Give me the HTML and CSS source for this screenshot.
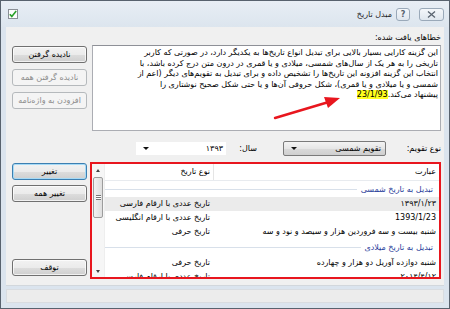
FILE: index.html
```html
<!DOCTYPE html>
<html lang="fa">
<head>
<meta charset="utf-8">
<title>مبدل تاریخ</title>
<link rel="stylesheet" href="styles.css">
</head>
<body>
<div class="window" dir="rtl">
  <div class="titlebar">
    <div class="tb-group">
      <div class="tbtn close">
        <svg width="9" height="7" viewBox="0 0 9 7"><path d="M1 0.5 L8 6.5 M8 0.5 L1 6.5" stroke="#5a6470" stroke-width="1.3" fill="none"/></svg>
      </div>
      <div class="tbtn help"><span>?</span></div>
      <div class="title">مبدل تاریخ</div>
    </div>
    <svg class="app-icon" width="10" height="10" viewBox="0 0 10 10">
      <rect x="0.5" y="0.5" width="9" height="9" fill="#fdfdfd" stroke="#8a8f96"/>
      <path d="M1.8 5.2 L3.8 7.4 L8.2 2" fill="none" stroke="#2aa12a" stroke-width="1.6"/>
    </svg>
  </div>

  <div class="client">
    <div class="main">
      <div class="caption">خطاهای یافت شده:</div>
      <div class="textbox">
        <div class="line">این گزینه کارایی بسیار بالایی برای تبدیل انواع تاریخ‌ها به یکدیگر دارد، در صورتی که کاربر</div>
        <div class="line">تاریخی را به هر یک از سال‌های شمسی، میلادی و یا قمری در درون متن درج کرده باشد، با</div>
        <div class="line">انتخاب این گزینه افزونه این تاریخ‌ها را تشخیص داده و برای تبدیل به تقویم‌های دیگر (اعم از</div>
        <div class="line">شمسی و یا میلادی و یا قمری)، شکل حروفی آن‌ها و یا حتی شکل صحیح نوشتاری را</div>
        <div class="line">پیشنهاد می‌کند.<span class="hl">23/1/93</span></div>
      </div>
      <div class="options">
        <div class="opt-label cal-label">نوع تقویم:</div>
        <div class="combo combo-btn"><span>تقویم شمسی</span><i class="drop"></i></div>
        <div class="opt-label year-label">سال:</div>
        <div class="combo combo-edit"><span>۱۳۹۳</span><i class="drop"></i></div>
      </div>
      <div class="list">
        <div class="lv">
          <div class="lv-head">
            <div class="c1">عبارت</div>
            <div class="c2">نوع تاریخ</div>
          </div>
          <div class="group g1"><span>تبدیل به تاریخ شمسی</span><i class="gline"></i></div>
          <div class="row hot"><div class="c1">۱۳۹۳/۱/۲۳</div><div class="c2">تاریخ عددی با ارقام فارسی</div></div>
          <div class="row"><div class="c1">1393/1/23</div><div class="c2">تاریخ عددی با ارقام انگلیسی</div></div>
          <div class="row"><div class="c1">شنبه بیست و سه فروردین هزار و سیصد و نود و سه</div><div class="c2">تاریخ حرفی</div></div>
          <div class="group g2"><span>تبدیل به تاریخ میلادی</span><i class="gline"></i></div>
          <div class="row"><div class="c1">شنبه دوازده آوریل دو هزار و چهارده</div><div class="c2">تاریخ حرفی</div></div>
          <div class="row"><div class="c1">۲۰۱۴/۴/۱۲</div><div class="c2">تاریخ عددی با ارقام فارسی</div></div>
        </div>
        <div class="scrollbar">
          <div class="sb-btn"><i class="up"></i></div>
          <div class="sb-thumb"><i class="grip"></i></div>
          <div class="sb-track"></div>
          <div class="sb-btn"><i class="down"></i></div>
        </div>
      </div>
    </div>

    <div class="side">
      <div class="btn b1">نادیده گرفتن</div>
      <div class="btn disabled b2">نادیده گرفتن همه</div>
      <div class="btn disabled b3">افزودن به واژه‌نامه</div>
      <div class="btn focus b4">تغییر</div>
      <div class="btn b5">تغییر همه</div>
      <div class="btn b6">توقف</div>
    </div>
  </div>

  <div class="statusbar"><div class="status-inner"></div></div>

  <svg class="annot" width="450" height="309" viewBox="0 0 450 309">
    <line x1="275" y1="118" x2="327" y2="102.5" stroke="#e8161e" stroke-width="2.4" stroke-linecap="round"/>
    <polygon points="340,98 324,97 328,108" fill="#e8161e"/>
  </svg>
</div>
</body>
</html>
```

FILE: styles.css
```css
* { box-sizing: border-box; }
html, body { margin: 0; padding: 0; }
body {
  width: 450px;
  height: 309px;
  overflow: hidden;
  background: #ffffff;
  font-family: "DejaVu Sans", "Noto Sans", sans-serif;
  font-size: 8px;
  color: #000;
}

.window {
  position: relative;
  width: 450px;
  height: 309px;
  border: 1px solid #58626e;
  background: #dbe4ee;
  display: flex;
  flex-direction: column;
}

/* title bar */
.titlebar {
  height: 26px;
  display: flex;
  justify-content: space-between;
  align-items: flex-start;
  padding: 7px 5px 0 7px;
  background: linear-gradient(#e8eef5, #dce5ee);
}
.tb-group {
  display: flex;
  align-items: flex-start;
}
.tbtn {
  height: 13px;
  border: 1px solid #9aa9b9;
  border-radius: 3px;
  background: linear-gradient(#f4f7fa, #dfe6ee);
  display: flex;
  align-items: center;
  justify-content: center;
  color: #56606c;
  font-size: 8px;
}
.tbtn.close { width: 25px; }
.tbtn.help { width: 14px; margin-right: 9px; font-weight: bold; }
.title { margin-right: 4px; line-height: 14px; color: #1c1c1c; }
.app-icon { margin-top: 1px; }

/* client */
.client {
  margin: 0 5px;
  height: 258px;
  background: #f0f0f0;
  display: flex;
  gap: 5px;
  padding: 4px 3px 0 6px;
}
.main {
  width: 349px;
  display: flex;
  flex-direction: column;
}
.side {
  width: 75px;
  display: flex;
  flex-direction: column;
}

.caption { height: 14px; line-height: 13px; }
.textbox {
  height: 86px;
  background: #fff;
  border: 1px solid #abadb3;
  border-top-color: #8e9097;
  padding: 2px 2px 0 4px;
  line-height: 10.6px;
  overflow: hidden;
}
.line { white-space: nowrap; }
.hl { background: #ffff1e; }

.options {
  margin-top: 10px;
  height: 15px;
  display: flex;
  align-items: center;
}
.opt-label { line-height: 15px; }
.cal-label { width: 55px; }
.year-label { width: 56px; padding-right: 26px; }
.combo {
  height: 15px;
  display: flex;
  align-items: center;
  justify-content: space-between;
}
.combo-btn {
  width: 103px;
  border: 1px solid #7a7a7a;
  border-radius: 2px;
  background: linear-gradient(#f3f3f3, #e6e6e6 50%, #dadada 51%, #cfcfcf);
  padding: 0 4px 0 7px;
}
.combo-edit {
  width: 92px;
  background: #fff;
  border: 1px solid #f0f0f0;
  padding: 0 3px 0 7px;
}
.drop {
  width: 0;
  height: 0;
  border-left: 3px solid transparent;
  border-right: 3px solid transparent;
  border-top: 3px solid #111;
}

/* list view */
.list {
  margin-top: 6px;
  margin-left: -2px;
  height: 117px;
  border: 2px solid #e8161e;
  background: #fff;
  display: flex;
  overflow: hidden;
}
.lv { flex: 1; overflow: hidden; }
.lv-head {
  height: 17px;
  display: flex;
  border-bottom: 1px solid #e8ebef;
  line-height: 16px;
}
.c1 { width: 226px; padding-right: 3px; white-space: nowrap; overflow: hidden; }
.c2 { width: 108px; padding-right: 3px; white-space: nowrap; overflow: hidden; }
.lv-head .c1 { border-left: 1px solid #e5e5e5; }
.group {
  display: flex;
  align-items: center;
  padding-right: 6px;
  color: #1f3b99;
}
.group.g1 { height: 16px; }
.group.g2 { height: 17px; }
.gline {
  flex: 1;
  height: 1px;
  margin-right: 4px;
  background: #d8e0ea;
}
.row { height: 14px; display: flex; line-height: 14px; }
.row.hot { background: #ebebeb; }

.scrollbar {
  width: 13px;
  display: flex;
  flex-direction: column;
  background: #f6f6f6;
  border-right: 1px solid #eeeeee;
}
.sb-btn {
  height: 12px;
  display: flex;
  align-items: center;
  justify-content: center;
}
.up, .down {
  width: 0;
  height: 0;
  border-left: 2.5px solid transparent;
  border-right: 2.5px solid transparent;
}
.up { border-bottom: 3px solid #404040; }
.down { border-top: 3px solid #404040; }
.sb-thumb {
  margin: 1px 1px 0;
  height: 41px;
  border: 1px solid #9c9c9c;
  border-radius: 2px;
  background: linear-gradient(90deg, #f2f2f2, #dedede);
  display: flex;
  align-items: center;
  justify-content: center;
}
.grip {
  width: 5px;
  height: 5px;
  border-top: 1px solid #777;
  border-bottom: 1px solid #777;
  background: linear-gradient(#fff 0 1px, #777 1px 2px, #fff 2px);
}
.sb-track { flex: 1; }

/* buttons */
.btn {
  height: 17px;
  border: 1px solid #707070;
  border-radius: 3px;
  background: linear-gradient(#f2f2f2, #ebebeb 50%, #dddddd 51%, #cfcfcf);
  box-shadow: inset 0 0 0 1px rgba(255, 255, 255, 0.7);
  display: flex;
  align-items: center;
  justify-content: center;
  white-space: nowrap;
}
.btn.disabled {
  border-color: #b5b9bc;
  background: #f4f4f4;
  box-shadow: none;
  color: #8c8c8c;
}
.btn.focus {
  border-color: #3c7fb1;
  box-shadow: inset 0 0 0 1px #a6daf6;
}
.b1 { margin-top: 15px; }
.b2 { margin-top: 6px; }
.b3 { margin-top: 6px; }
.b4 { margin-top: 54px; }
.b5 { margin-top: 5px; }
.b6 { margin-top: 57px; }

/* status bar */
.statusbar {
  margin: 0 5px;
  height: 19px;
  padding: 3px 0 1px;
  border-top: 1px solid #d2d7dc;
}
.status-inner {
  height: 100%;
  border: 1px solid #d9dce0;
  background: #ececec;
}

/* annotation arrow overlay */
.annot {
  position: absolute;
  left: -1px;
  top: -1px;
  pointer-events: none;
}
```
